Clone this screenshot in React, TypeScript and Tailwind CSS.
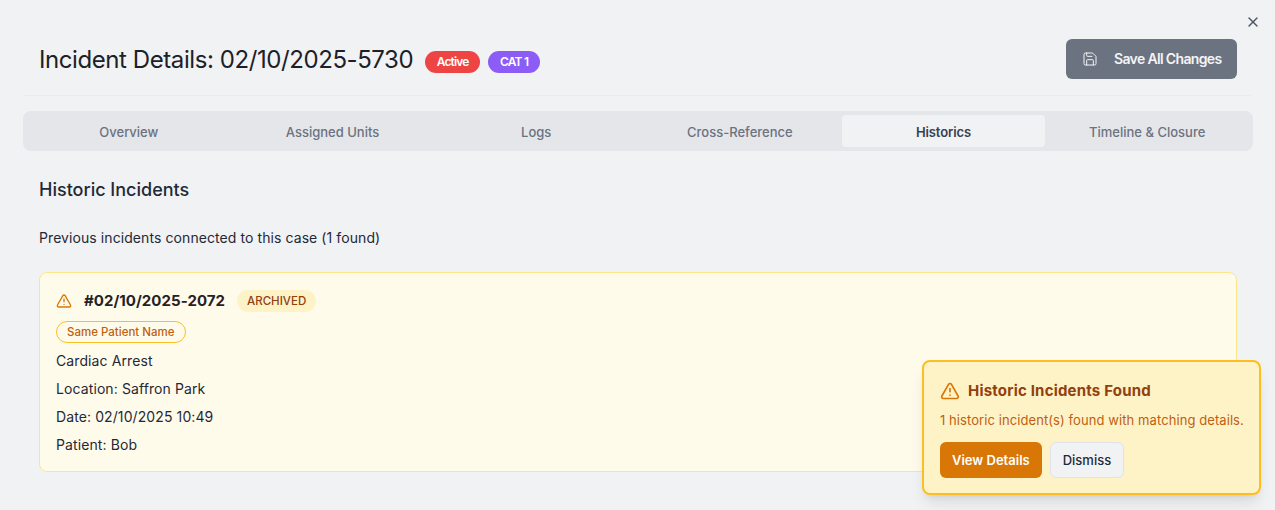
import { Save, TriangleAlert, X } from "lucide-react";

const tabs = ["Overview", "Assigned Units", "Logs", "Cross-Reference", "Historics", "Timeline & Closure"];

export default function App() {
  return (
    <div className="relative h-[510px] w-[1275px] overflow-hidden bg-[#f1f2f4] font-['Inter',sans-serif] text-[#1f2937]">
      <button className="absolute right-[14px] top-[14px] text-[#4b5563]"><X size={16} /></button>

      <div className="flex flex-col px-6 pt-[39px]">
        <header className="flex h-[57px] items-start justify-between border-b border-[#e9ebee] pl-[15px] pr-[14px]">
          <div className="flex h-10 items-center gap-2">
            <h1 className="pt-px text-2xl font-normal leading-8 tracking-[-0.42px] text-[#1c2128]">Incident Details: 02/10/2025-5730</h1>
            <span className="ml-1 mt-[6px] rounded-full bg-[#ef4444] px-[11.5px] py-[2px] text-xs font-semibold leading-[18px] tracking-[-0.85px] text-white">Active</span>
            <span className="mt-[6px] rounded-full bg-[#8b5cf6] px-3 py-[2px] text-xs font-semibold leading-[18px] tracking-[-0.8px] text-white">CAT 1</span>
          </div>
          <button className="flex h-10 w-[171px] items-center rounded-md bg-[#6b7280] pl-4 text-sm font-semibold tracking-[-0.65px] text-[#f3f4f6]">
            <Save size={16} strokeWidth={1.5} className="mr-4" />
            Save All Changes
          </button>
        </header>

        <nav className="-ml-px mt-[15px] grid h-10 w-[1230px] grid-cols-6 items-center rounded-lg bg-[#e4e6ea] px-1">
          {tabs.map((t) => (
            <div
              key={t}
              className={
                t === "Historics"
                  ? "flex h-8 items-center justify-center rounded-sm bg-[#f1f2f4] pt-[3px] text-[13px] font-semibold tracking-[-0.1px] text-[#374151]"
                  : "flex h-8 items-center justify-center pt-[3px] text-[13px] font-medium text-[#6b7280]"
              }
            >
              {t}
            </div>
          ))}
        </nav>

        <main className="pl-[15px] pr-[14px]">
          <h2 className="mt-[25px] text-lg font-medium leading-7 text-[#1f2937]">Historic Incidents</h2>
          <p className="mt-6 text-sm leading-5 tracking-[0.08px] text-[#1f2937]">Previous incidents connected to this case (1 found)</p>

          <section className="mt-6 flex h-[200px] flex-col rounded-lg border border-[#fde68a] bg-[#fffbeb] px-4 pt-4">
            <div className="flex h-6 items-center">
              <TriangleAlert size={16} className="text-[#d97706]" />
              <strong className="ml-3 text-[15px] font-bold tracking-[0.05px] text-[#1f2328]">#02/10/2025-2072</strong>
              <span className="ml-3 rounded-full bg-[#fef3c7] px-[10px] py-[2px] text-[11.5px] font-medium leading-[18px] text-[#92400e]">ARCHIVED</span>
            </div>
            <div className="mt-2 flex">
              <span className="rounded-full border border-[#fbbf24] bg-[#fffbeb] px-[10px] text-[11.5px] font-medium leading-[20px] text-[#bf5f10]">Same Patient Name</span>
            </div>
            <div className="mt-1 text-sm tracking-[0.1px] text-[#1f2937]">
              <p className="h-7 leading-7">Cardiac Arrest</p>
              <p className="h-7 leading-7">Location: Saffron Park</p>
              <p className="h-7 leading-7">Date: 02/10/2025 10:49</p>
              <p className="h-7 leading-7">Patient: Bob</p>
            </div>
          </section>
        </main>
      </div>

      <aside className="absolute left-[922px] top-[360px] h-[135px] w-[339px] rounded-lg border-2 border-[#fbbf24] bg-[#fef3c7] pl-4 pt-[17px] shadow-lg">
        <div className="flex items-center gap-2">
          <TriangleAlert size={20} className="text-[#d97706]" />
          <h3 className="text-[15px] font-bold leading-6 tracking-[0.2px] text-[#92400e]">Historic Incidents Found</h3>
        </div>
        <p className="mt-[7px] whitespace-nowrap text-[13px] leading-5 tracking-[0.08px] text-[#bf5f10]">1 historic incident(s) found with matching details.</p>
        <div className="mt-3 flex gap-2">
          <button className="h-9 rounded-md bg-[#d97706] px-3 pt-px text-[13px] font-semibold text-white">View Details</button>
          <button className="h-9 rounded-md border border-[#dfe2e6] bg-[#f1f2f4] px-3 pt-px text-[13px] font-medium text-[#1f2937]">Dismiss</button>
        </div>
      </aside>
    </div>
  );
}
